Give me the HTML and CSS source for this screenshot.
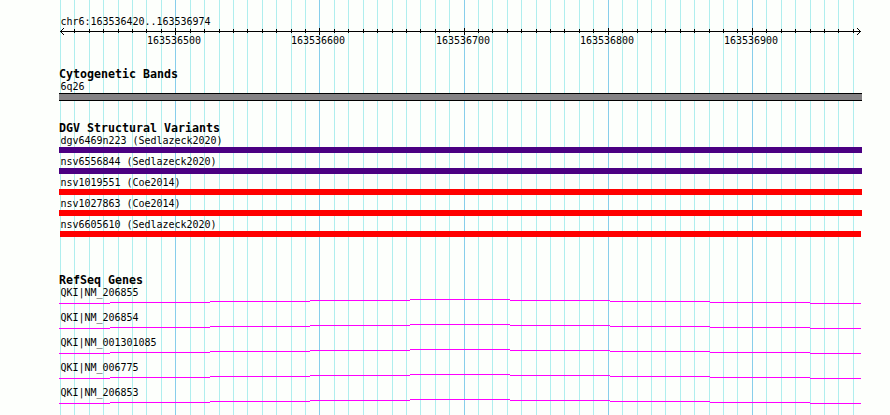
FILE: index.html
```html
<!DOCTYPE html>
<html lang="en">
<head>
    <meta charset="UTF-8">
    <title>chr6:163536420..163536974</title>
    <link rel="stylesheet" href="styles.css">
</head>
<body>
    <div class="browser">
        <svg class="grid" id="grid" width="890" height="415"></svg>

        <div class="ruler">
            <p class="label">chr6:163536420..163536974</p>
            <svg class="axis" id="axis" width="803" height="25" shape-rendering="crispEdges">
                <path d="M1 6.5H802M1.5 6v1M2.5 5v1M2.5 7v1M3.5 4v1M3.5 8v1M4.5 3v1M4.5 9v1" />
                <path d="M800.5 5v1M800.5 7v1M799.5 4v1M799.5 8v1M798.5 3v1M798.5 9v1" />
            </svg>
        </div>

        <div class="track cytobands">
            <h2>Cytogenetic Bands</h2>
            <p class="label">6q26</p>
            <div class="band"></div>
        </div>

        <div class="track variants">
            <h2>DGV Structural Variants</h2>
            <div class="variant loss-gain">
                <p class="label">dgv6469n223 (Sedlazeck2020)</p>
                <div class="bar"></div>
            </div>
            <div class="variant loss-gain">
                <p class="label">nsv6556844 (Sedlazeck2020)</p>
                <div class="bar"></div>
            </div>
            <div class="variant loss">
                <p class="label">nsv1019551 (Coe2014)</p>
                <div class="bar"></div>
            </div>
            <div class="variant loss">
                <p class="label">nsv1027863 (Coe2014)</p>
                <div class="bar"></div>
            </div>
            <div class="variant loss">
                <p class="label">nsv6605610 (Sedlazeck2020)</p>
                <div class="bar inset"></div>
            </div>
        </div>

        <div class="track genes" id="genes">
            <h2>RefSeq Genes</h2>
            <!-- Genes will be added here dynamically -->
        </div>
    </div>

    <script>
        const svgNS = 'http://www.w3.org/2000/svg';
        const start = 60;
        const step = 14.414;
        const grid = document.getElementById('grid');
        const axis = document.getElementById('axis');
        const genes = document.getElementById('genes');

        function addRect(parent, className, x, y, width, height) {
            const rect = document.createElementNS(svgNS, 'rect');
            rect.setAttribute('class', className);
            rect.setAttribute('x', x);
            rect.setAttribute('y', y);
            rect.setAttribute('width', width);
            rect.setAttribute('height', height);
            parent.appendChild(rect);
        }

        // One grid line and tick every 10 bases, labelled every 100
        for (let i = 0; i <= 55; i++) {
            const x = Math.round(start + i * step);
            const major = i % 10 === 8;
            addRect(grid, major ? 'major' : 'minor', x, 0, 1, 415);
            if (i > 0) {
                addRect(axis, 'tick', x - 59, major ? 3 : 4, 1, major ? 7 : 4);
            }
            if (major) {
                const text = document.createElementNS(svgNS, 'text');
                text.setAttribute('x', x - 59 - 28);
                text.setAttribute('y', 19);
                text.textContent = 163536420 + i * 10;
                axis.appendChild(text);
            }
        }

        // Introns are drawn as a shallow peak
        const steps = [
            [0, 51, 4], [51, 100, 3], [151, 100, 2], [251, 100, 1], [351, 100, 0],
            [451, 100, 1], [551, 100, 2], [651, 100, 3], [751, 51, 4]
        ];

        ['NM_206855', 'NM_206854', 'NM_001301085', 'NM_006775', 'NM_206853'].forEach(name => {
            const gene = document.createElement('div');
            gene.className = 'gene';
            const label = document.createElement('p');
            label.className = 'label';
            label.textContent = `QKI|${name}`;
            const intron = document.createElementNS(svgNS, 'svg');
            intron.setAttribute('width', 803);
            intron.setAttribute('height', 5);
            steps.forEach(([x, width, y]) => addRect(intron, 'intron', x, y, width, 1));
            gene.append(label, intron);
            genes.appendChild(gene);
        });
    </script>
</body>
</html>
```

FILE: styles.css
```css
body {
    margin: 0;
    background-color: #fdfffc;
    color: #000;
    font-family: "DejaVu Sans Mono", "Liberation Mono", monospace;
    font-size: 10px;
    overflow: hidden;
}
.browser {
    position: relative;
    box-sizing: border-box;
    width: 890px;
    height: 415px;
    padding: 15px 28px 0 59px;
    overflow: hidden;
}
.grid {
    position: absolute;
    top: 0;
    left: 0;
    z-index: -1;
}
.minor {
    fill: #afeeee;
}
.major {
    fill: #87ceeb;
}
svg {
    display: block;
}
h2 {
    margin: 0;
    height: 12px;
    line-height: 12px;
    font-size: 11.63px;
    white-space: pre;
}
.label {
    margin: 0;
    padding-left: 1.4px;
    height: 12px;
    line-height: 14px;
    letter-spacing: -0.02px;
    white-space: pre;
}
.ruler {
    height: 53px;
}
.ruler .label {
    line-height: 13px;
}
.axis {
    margin-top: -2px;
    overflow: visible;
}
.axis path {
    stroke: #000;
    fill: none;
}
.axis text {
    letter-spacing: -0.02px;
}
.cytobands {
    height: 54px;
}
.cytobands .label {
    height: 13px;
}
.band {
    height: 6px;
    background-color: #848284;
    border-top: 1px solid #000;
    border-bottom: 1px solid #000;
}
.variants {
    height: 152px;
}
.variant {
    height: 21px;
}
.variant .label {
    height: 13px;
}
.bar {
    height: 6px;
}
.bar.inset {
    margin: 0 1px;
}
.loss-gain .bar {
    background-color: #4b0082;
}
.loss .bar {
    background-color: #ff0000;
}
.gene {
    height: 25px;
}
.gene .label {
    height: 13px;
}
.intron {
    fill: #ff00ff;
}
```
